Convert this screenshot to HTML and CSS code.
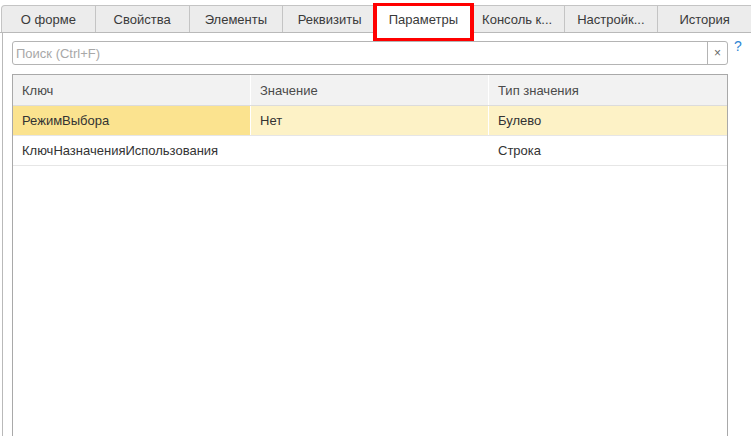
FILE: index.html
```html
<!DOCTYPE html>
<html lang="ru">
<head>
<meta charset="utf-8">
<link rel="stylesheet" href="styles.css">
</head>
<body>
<div class="tabs">
  <div class="tab first">О форме</div>
  <div class="tab">Свойства</div>
  <div class="tab">Элементы</div>
  <div class="tab">Реквизиты</div>
  <div class="tab active">Параметры<span class="mark"></span></div>
  <div class="tab">Консоль к...</div>
  <div class="tab">Настройк...</div>
  <div class="tab">История</div>
</div>
<div class="panel">
  <div class="search-row">
    <div class="search">
      <span class="placeholder">Поиск (Ctrl+F)</span>
      <span class="clear">×</span>
    </div>
    <span class="help">?</span>
  </div>
  <div class="grid">
    <div class="row head">
      <div class="cell">Ключ</div>
      <div class="cell">Значение</div>
      <div class="cell">Тип значения</div>
    </div>
    <div class="row selected">
      <div class="cell current">РежимВыбора</div>
      <div class="cell">Нет</div>
      <div class="cell">Булево</div>
    </div>
    <div class="row">
      <div class="cell">КлючНазначенияИспользования</div>
      <div class="cell"></div>
      <div class="cell">Строка</div>
    </div>
  </div>
</div>
</body>
</html>
```

FILE: styles.css
```css
html, body {
  margin: 0;
  padding: 0;
  background: #fff;
  overflow: hidden;
}
body {
  width: 751px;
  height: 436px;
  font-family: "Liberation Sans", Arial, sans-serif;
  font-size: 13px;
  color: #333;
}
.tabs {
  display: flex;
  padding: 5px 0 0 1px;
  border-bottom: 1px solid #b9b9b9;
  height: 27px;
}
.tab {
  flex: 1;
  position: relative;
  box-sizing: border-box;
  height: 27px;
  margin-right: -1px;
  border: 1px solid #c4c4c4;
  border-bottom: none;
  background: #ececec;
  display: flex;
  align-items: center;
  justify-content: center;
  color: #3a3a3a;
  white-space: nowrap;
}
.tab.first {
  border-top-left-radius: 4px;
}
.tab.active {
  background: #fff;
  height: 28px;
  margin-bottom: -1px;
  z-index: 1;
}
.mark {
  position: absolute;
  left: -4px;
  right: -4px;
  top: -3px;
  bottom: -8px;
  border: 3px solid #f00;
  border-left-width: 4px;
  border-right-width: 4px;
}
.panel {
  margin-left: 2px;
  border-left: 1px solid #b9b9b9;
  height: 403px;
  padding: 8px 0 0 9px;
}
.search-row {
  display: flex;
  align-items: flex-start;
}
.search {
  flex: 1;
  height: 24px;
  box-sizing: border-box;
  border: 1px solid #b4b4b4;
  border-radius: 3px;
  display: flex;
  align-items: center;
}
.placeholder {
  flex: 1;
  padding-left: 3px;
  color: #a8a8a8;
}
.clear {
  width: 19px;
  height: 22px;
  border-left: 1px solid #b4b4b4;
  display: flex;
  align-items: center;
  justify-content: center;
  color: #666;
  font-size: 12px;
}
.help {
  width: 23px;
  box-sizing: border-box;
  padding-left: 6px;
  margin-top: -3px;
  color: #2f86d4;
  font-size: 14px;
}
.grid {
  margin-top: 9px;
  margin-right: 23px;
  border: 1px solid #a9a9a9;
  height: 380px;
}
.row {
  display: grid;
  grid-template-columns: 238px 238px 1fr;
  height: 29px;
  border-bottom: 1px solid #e6e6e6;
}
.row.head {
  height: 30px;
  background: #f2f2f2;
  border-bottom: 1px solid #dcdcdc;
  color: #4a4a4a;
}
.cell {
  padding-left: 9px;
  display: flex;
  align-items: center;
  border-right: 1px solid #fff;
  white-space: nowrap;
}
.row .cell:last-child {
  border-right: none;
}
.row.selected {
  background: #fdf2c6;
}
.cell.current {
  background: #fbe38f;
}
```
